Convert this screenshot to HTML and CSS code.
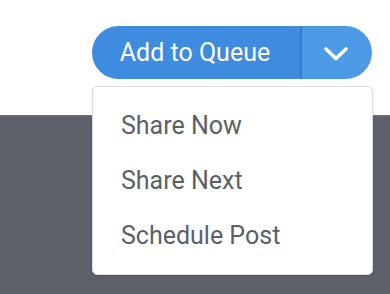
FILE: index.html
```html
<!DOCTYPE html>
<html>
<head>
<meta charset="utf-8">
<link rel="stylesheet" href="styles.css">
</head>
<body>
<div class="page">
  <header class="top">
    <div class="split">
      <button class="main">Add to Queue</button>
      <button class="toggle" aria-label="More">
        <svg width="26" height="16" viewBox="0 0 26 16"><path d="M3 3 L13 12.5 L23 3" fill="none" stroke="#fff" stroke-width="3.6" stroke-linecap="round" stroke-linejoin="round"/></svg>
      </button>
      <ul class="menu">
        <li>Share Now</li>
        <li>Share Next</li>
        <li>Schedule Post</li>
      </ul>
    </div>
  </header>
  <main class="dark"></main>
</div>
</body>
</html>
```
FILE: styles.css
```css
html, body { margin: 0; padding: 0; }
body { font-family: Roboto, "Noto Sans", sans-serif; background: #5c6068; }
.page { width: 390px; height: 294px; display: flex; flex-direction: column; overflow: hidden; }
.top {
  height: 115px;
  background: #fff;
  display: flex;
  justify-content: flex-end;
  align-items: flex-start;
  padding: 26px 18px 0 0;
  box-sizing: border-box;
  flex: none;
}
.dark { flex: 1; background: #5c6068; border-top: 2px solid #676b72; }
.split { position: relative; display: flex; height: 53px; }
.split button {
  border: 0; margin: 0; color: #fff; font-family: inherit; cursor: pointer;
}
.main {
  width: 210px;
  background: #3e8be0;
  border-radius: 27px 0 0 27px;
  font-size: 25px;
  padding: 0 2px 0 0;
  text-align: center;
  border-right: 2px solid #367ccb !important;
}
.toggle {
  width: 70px;
  background: #4c9ae6;
  border-radius: 0 27px 27px 0;
  display: flex; align-items: center; justify-content: center;
  padding: 2px 2px 0 0;
}
.toggle svg { display: block; }
.menu {
  position: absolute;
  top: 60px;
  left: 0;
  width: 281px;
  height: 189px;
  box-sizing: border-box;
  margin: 0;
  padding: 11px 0;
  list-style: none;
  background: #fff;
  border: 1px solid #dadde2;
  border-radius: 5px;
  box-shadow: 0 1px 2px rgba(0,0,0,0.15);
}
.menu li {
  height: 55px;
  line-height: 55px;
  padding-left: 28px;
  font-size: 25px;
  color: #59606a;
}
```
